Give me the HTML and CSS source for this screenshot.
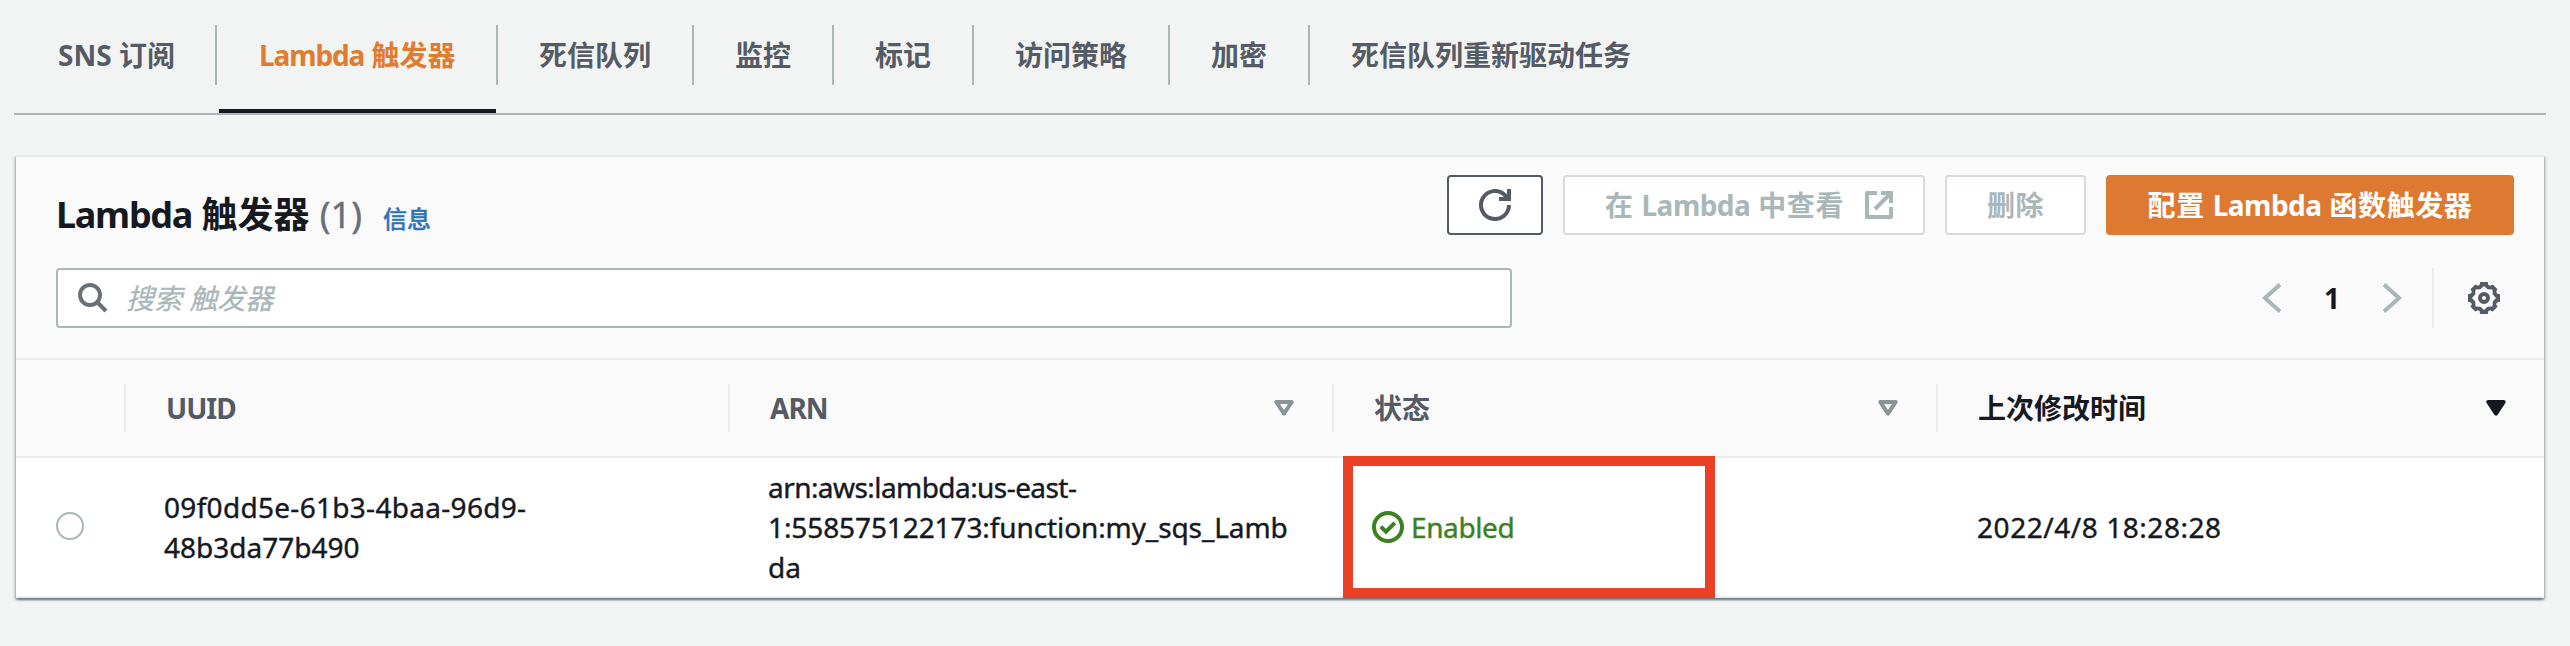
FILE: index.html
```html
<!DOCTYPE html>
<html lang="zh-CN">
<head>
<meta charset="utf-8">
<title>Lambda 触发器</title>
<link rel="stylesheet" href="styles.css">
</head>
<body>
<nav class="tabs">
  <a class="tab tab-first"><span>SNS 订阅</span></a>
  <a class="tab tab-active"><span><span class="latin">Lambda</span> 触发器</span></a>
  <a class="tab"><span>死信队列</span></a>
  <a class="tab"><span>监控</span></a>
  <a class="tab"><span>标记</span></a>
  <a class="tab"><span>访问策略</span></a>
  <a class="tab"><span>加密</span></a>
  <a class="tab"><span>死信队列重新驱动任务</span></a>
</nav>
<main class="panel">
  <header class="panel-head">
    <div class="title-row">
      <h2 class="title"><span class="latin">Lambda</span> 触发器 <span class="count">(1)</span></h2>
      <a class="info">信息</a>
      <div class="actions">
        <button class="btn btn-icon"><svg width="32" height="32" viewBox="0 0 16 16" fill="none" stroke="currentColor" stroke-width="2"><path d="M15 8A7 7 0 1 1 12.9 3L14.5 4.8"/><path d="M10 5h5V0"/></svg></button>
        <button class="btn btn-disabled btn-view"><span>在 <span class="latin">Lambda</span> 中查看</span><svg width="28" height="28" viewBox="0 0 14 14" fill="none" stroke="currentColor" stroke-width="2" stroke-linejoin="round"><path d="M6 1H1v12h12V8"/><path stroke-linejoin="miter" d="M8 1h5v5M5 9l8-8"/></svg></button>
        <button class="btn btn-disabled btn-delete"><span>删除</span></button>
        <button class="btn btn-primary"><span>配置 <span class="latin">Lambda</span> 函数触发器</span></button>
      </div>
    </div>
    <div class="filter-row">
      <div class="search">
        <svg width="30" height="30" viewBox="0 0 30 30" fill="none" stroke="#687078" stroke-width="4"><circle cx="12" cy="12" r="10"/><path d="M19 19l9 9"/></svg>
        <span class="placeholder">搜索 触发器</span>
      </div>
      <div class="pager">
        <svg width="20" height="30" viewBox="0 0 20 30" fill="none" stroke="#aab7b8" stroke-width="4"><path d="M18 1.5L3 15l15 13.5"/></svg>
        <span class="page">1</span>
        <svg width="20" height="30" viewBox="0 0 20 30" fill="none" stroke="#aab7b8" stroke-width="4"><path d="M2 1.5L17 15L2 28.5"/></svg>
        <span class="pager-line"></span>
        <svg class="gear" width="32" height="32" viewBox="-8 -8 16 16"><path fill="#545b64" fill-rule="evenodd" d="M8-1.9V1.9L6.5 2.2L6.1 3.1L6.7 4.4L4.4 6.7L3.1 6.1L2.2 6.5L1.9 8H-1.9L-2.2 6.5L-3.1 6.1L-4.4 6.7L-6.7 4.4L-6.1 3.1L-6.5 2.2L-8 1.9V-1.9L-6.5-2.2L-6.1-3.1L-6.7-4.4L-4.4-6.7L-3.1-6.1L-2.2-6.5L-1.9-8H1.9L2.2-6.5L3.1-6.1L4.4-6.7L6.7-4.4L6.1-3.1L6.5-2.2ZM6 0L4.4-1.8L4.24-4.24L1.8-4.4L0-6L-1.8-4.4L-4.24-4.24L-4.4-1.8L-6 0L-4.4 1.8L-4.24 4.24L-1.8 4.4L0 6L1.8 4.4L4.24 4.24L4.4 1.8Z"/><circle r="2" fill="none" stroke="#545b64" stroke-width="2"/></svg>
      </div>
    </div>
  </header>
  <section class="grid grid-head">
    <div></div>
    <div class="th"><span class="t-uuid">UUID</span></div>
    <div class="th"><span class="t-arn">ARN</span><svg class="sort" width="20" height="16" viewBox="0 0 20 16" fill="none" stroke="#879596" stroke-width="4" stroke-linejoin="round"><path d="M2.3 2h15.4L10 13.6z"/></svg></div>
    <div class="th"><span>状态</span><svg class="sort" width="20" height="16" viewBox="0 0 20 16" fill="none" stroke="#879596" stroke-width="4" stroke-linejoin="round"><path d="M2.3 2h15.4L10 13.6z"/></svg></div>
    <div class="th th-sorted"><span>上次修改时间</span><svg class="sort" width="20" height="16" viewBox="0 0 20 16" fill="#16191f" stroke="#16191f" stroke-width="4" stroke-linejoin="round"><path d="M2.3 2h15.4L10 13.6z"/></svg></div>
  </section>
  <section class="grid grid-row">
    <div class="select"><span class="radio"></span></div>
    <div class="td"><span class="uuid-a">09f0dd5e-61b3-4baa-96d9-</span><br>48b3da77b490</div>
    <div class="td"><span class="arn-a">arn:aws:lambda:us-east-</span><br><span class="arn-b">1:558575122173:function:my_sqs_Lamb</span><br>da</div>
    <div class="td status">
      <svg width="32" height="32" viewBox="0 0 16 16" fill="none" stroke="currentColor" stroke-width="2"><circle cx="8" cy="8" r="7"/><path d="M4.4 7.8l2.6 2.5l4.4-4.4"/></svg>
      <span class="status-text">Enabled</span>
      <span class="highlight"></span>
    </div>
    <div class="td date">2022/4/8 18:28:28</div>
  </section>
</main>
</body>
</html>
```
FILE: styles.css
```css
* { box-sizing: border-box; }
body {
  margin: 0;
  height: 646px;
  overflow: hidden;
  background: #f2f3f3;
  color: #16191f;
  font: 28px/40px "Noto Sans", "Noto Sans CJK SC", sans-serif;
}
svg { display: block; flex: none; }
.latin { letter-spacing: -1.1px; }

.tabs {
  display: flex;
  height: 115px;
  margin: 0 24px 0 14px;
  border-bottom: 2px solid #aab7b8;
  color: #545b64;
  font-weight: 700;
}
.tab {
  position: relative;
  height: 113px;
  padding-top: 25px;
  white-space: nowrap;
}
.tab > span {
  display: block;
  height: 60px;
  padding: 0 41px;
  border-right: 2px solid #aab7b8;
  line-height: 60px;
}
.tab-first > span { padding-left: 44px; width: 203px; }
.tab-active { width: 281px; color: #e07b2f; }
.tab-active > span { padding-left: 42px; }
.tab-active::after {
  content: "";
  position: absolute;
  left: 2px;
  right: 2px;
  bottom: 0;
  height: 4px;
  background: #16191f;
}
.tab:last-child > span { border-right: 0; }

.panel {
  width: 2528px;
  height: 443px;
  margin: 40px 0 0 16px;
  background: #fff;
  border-top: 2px solid #eaeded;
  border-bottom: 2px solid #eaeded;
  box-shadow: 0 2px 2px 0 rgba(0, 28, 36, .4), 2px 2px 2px 0 rgba(0, 28, 36, .15), -2px 2px 2px 0 rgba(0, 28, 36, .15);
}
.panel-head {
  height: 203px;
  padding: 18px 30px 0 40px;
  background: #fafafa;
  border-bottom: 2px solid #eaeded;
}
.title-row { display: flex; height: 60px; }
.title {
  margin: 10px 0 0;
  font-size: 36px;
  line-height: 60px;
  font-weight: 700;
  white-space: nowrap;
}
.title .latin { letter-spacing: -1.3px; }
.count { margin-left: 1px; color: #687078; font-weight: 400; -webkit-text-stroke: .4px; }
.info {
  margin: 14px 0 0 21px;
  color: #2e73b8;
  font-size: 24px;
  font-weight: 500;
  line-height: 60px;
  -webkit-text-stroke: .4px;
}
.actions { display: flex; gap: 20px; margin-left: auto; }
.btn {
  display: flex;
  align-items: center;
  justify-content: center;
  height: 60px;
  padding: 0;
  border: 2px solid #545b64;
  border-radius: 4px;
  background: #fff;
  color: #545b64;
  font: inherit;
  font-weight: 700;
  letter-spacing: .6px;
  white-space: nowrap;
}
.btn .latin { letter-spacing: -.5px; }
.btn-icon { width: 96px; }
.btn-disabled { border-color: #d5dbdb; color: #aab7b8; }
.btn-view { width: 362px; gap: 21px; padding-left: 10px; }
.btn-delete { width: 141px; }
.btn-primary { width: 408px; border-color: #dd7931; background: #dd7931; color: #fff; }

.filter-row { display: flex; justify-content: space-between; margin-top: 33px; height: 60px; }
.search {
  display: flex;
  align-items: center;
  gap: 18px;
  width: 1456px;
  padding-left: 20px;
  border: 2px solid #aab7b8;
  border-radius: 4px;
  background: #fff;
}
.placeholder { color: #aab7b8; font-style: italic; -webkit-text-stroke: .3px; }
.pager { display: flex; align-items: center; padding-right: 14px; font-weight: 700; }
.page { width: 16px; margin: 0 42px; text-align: center; }
.pager-line { width: 2px; height: 60px; margin: 0 34px 0 30px; background: #eaeded; }

.grid { display: grid; grid-template-columns: 108px 604px 604px 604px 608px; }
.grid-head { height: 98px; padding: 24px 0; background: #fafafa; border-bottom: 2px solid #eaeded; }
.th {
  display: flex;
  align-items: center;
  justify-content: space-between;
  height: 48px;
  padding: 0 38px 0 40px;
  border-left: 2px solid #eaeded;
  color: #545b64;
  font-weight: 700;
}
.th-sorted { color: #16191f; }
.t-uuid { letter-spacing: -1px; }
.t-arn { letter-spacing: -1px; }
.grid-row { height: 138px; align-items: center; }
.select { padding: 0 0 2px 40px; }
.radio { display: block; width: 28px; height: 28px; border: 2px solid #aab7b8; border-radius: 50%; background: #fff; }
.td { padding-left: 40px; white-space: nowrap; -webkit-text-stroke: .4px; }
.uuid-a { letter-spacing: .3px; }
.arn-a { letter-spacing: -.56px; }
.arn-b { letter-spacing: -.1px; }
.status { position: relative; display: flex; align-items: center; gap: 7px; height: 138px; color: #3b8120; }
.status-text { letter-spacing: -.4px; }
.highlight {
  position: absolute;
  left: 11px;
  top: -2px;
  width: 372px;
  height: 142px;
  border: 10px solid #ea4025;
}
.date { padding-left: 41px; letter-spacing: .55px; }
```
